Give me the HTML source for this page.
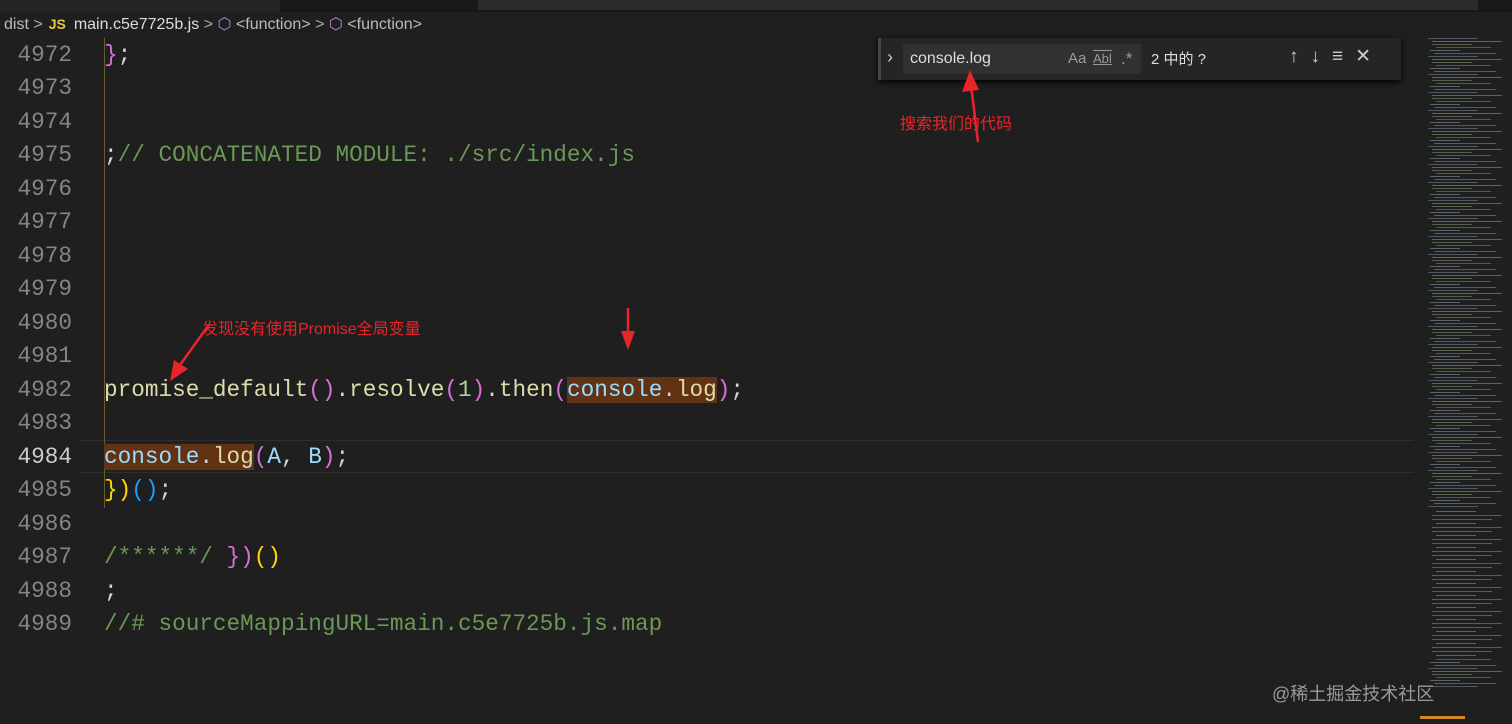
<!DOCTYPE html>
<html><head><meta charset="utf-8"><style>
body{margin:0;width:1512px;height:724px;background:#1f1f1f;overflow:hidden;position:relative;font-family:"Liberation Sans","Noto Sans CJK SC",sans-serif}
.top{position:absolute;left:0;top:0;width:1512px;height:12px;background:#181818}
.top .t{position:absolute;left:0;top:0;width:280px;height:12px;background:#252526}
.top .t2{position:absolute;left:478px;top:0;width:1000px;height:10px;background:#2a2a2a}
.bc{position:absolute;left:4px;top:12px;font-size:16px;color:#bbb;white-space:nowrap;height:24px;line-height:24px}
.bc .js{color:#e5c84a;font-weight:bold;font-size:14px;margin:0 8px 0 6px}
.bc .w{color:#ddd}
.bc .g{color:#aaa}
.code{position:absolute;left:0;top:39px;font-family:"Liberation Mono",monospace;font-size:22.7px}
.ln{position:absolute;left:0;width:72px;text-align:right;color:#858585;height:33.47px;line-height:33.47px}
.tx{position:absolute;left:104px;white-space:pre;color:#d4d4d4;height:33.47px;line-height:33.47px}
.c{color:#6a9955}.f{color:#dcdcaa}.v{color:#9cdcfe}.n{color:#b5cea8}.p{color:#da70d6}.y{color:#ffd700}.b{color:#179fff}
.hl{background:#613214}
.guide{position:absolute;left:104px;top:38px;width:1px;height:470px;background:#6b5b2a}
.cur{position:absolute;left:80px;top:440px;width:1334px;height:31px;border-top:1px solid #2e2e2e;border-bottom:1px solid #2e2e2e}
.find{position:absolute;left:878px;top:38px;width:520px;height:42px;background:#252526;box-shadow:0 2px 6px #000;border-left:3px solid #454545}
.inp{position:absolute;left:22px;top:6px;width:238px;height:30px;background:#313131;color:#ddd;font-size:16px;line-height:30px;padding-left:7px;box-sizing:border-box}
.mm{position:absolute;left:1418px;top:38px;width:94px;height:686px}
.red{position:absolute;color:#e8252a;font-size:16px;white-space:nowrap}
.wm{position:absolute;left:1272px;top:680px;color:#9a9a9a;font-size:18px}
</style></head><body>
<div class="top"><div class="t"></div><div class="t2"></div></div>
<div class="bc">dist <span class="g">&gt;</span><span class="js">JS</span><span class="w">main.c5e7725b.js</span> <span class="g">&gt;</span> <span style="color:#b180d7">⬡</span> &lt;function&gt; <span class="g">&gt;</span> <span style="color:#b180d7">⬡</span> &lt;function&gt;</div>
<div class="cur"></div>
<div class="guide"></div>
<div class="code">
<div class="ln" style="top:0">4972</div><div class="tx" style="top:0"><span class="p">}</span>;</div>
<div class="ln" style="top:33.47px">4973</div>
<div class="ln" style="top:66.94px">4974</div>
<div class="ln" style="top:100.41px">4975</div><div class="tx" style="top:100.41px">;<span class="c">// CONCATENATED MODULE: ./src/index.js</span></div>
<div class="ln" style="top:133.88px">4976</div>
<div class="ln" style="top:167.35px">4977</div>
<div class="ln" style="top:200.82px">4978</div>
<div class="ln" style="top:234.29px">4979</div>
<div class="ln" style="top:267.76px">4980</div>
<div class="ln" style="top:301.23px">4981</div>
<div class="ln" style="top:334.7px">4982</div><div class="tx" style="top:334.7px"><span class="f">promise_default</span><span class="p">()</span>.<span class="f">resolve</span><span class="p">(</span><span class="n">1</span><span class="p">)</span>.<span class="f">then</span><span class="p">(</span><span class="hl"><span class="v">console</span>.<span class="f">log</span></span><span class="p">)</span>;</div>
<div class="ln" style="top:368.17px">4983</div>
<div class="ln" style="top:401.64px;color:#ccc">4984</div><div class="tx" style="top:401.64px"><span class="hl"><span class="v">console</span>.<span class="f">log</span></span><span class="p">(</span><span class="v">A</span>, <span class="v">B</span><span class="p">)</span>;</div>
<div class="ln" style="top:435.11px">4985</div><div class="tx" style="top:435.11px"><span class="y">}</span><span class="y">)</span><span class="b">()</span>;</div>
<div class="ln" style="top:468.58px">4986</div>
<div class="ln" style="top:502.05px">4987</div><div class="tx" style="top:502.05px"><span class="c">/******/</span> <span class="p">})</span><span class="y">()</span></div>
<div class="ln" style="top:535.52px">4988</div><div class="tx" style="top:535.52px">;</div>
<div class="ln" style="top:568.99px">4989</div><div class="tx" style="top:568.99px"><span class="c">//# sourceMappingURL=main.c5e7725b.js.map</span></div>
</div>
<div class="find">
<div style="position:absolute;left:6px;top:9px;color:#ccc;font-size:18px">›</div>
<div class="inp">console.log<span style="position:absolute;left:165px;color:#999;font-size:15px">Aa</span><span style="position:absolute;left:190px;color:#999;font-size:13px;text-decoration:underline overline">Abl</span><span style="position:absolute;left:218px;color:#999;font-size:17px">.*</span></div>
<div style="position:absolute;left:270px;top:10px;color:#ddd;font-size:15px">2 中的 ?</div>
<div style="position:absolute;left:408px;top:7px;color:#ccc;font-size:19px;letter-spacing:12px">↑↓≡✕</div>
</div>
<svg class="mm" viewBox="0 0 94 686">
<defs>
<pattern id="a" width="94" height="18" patternUnits="userSpaceOnUse">
<rect x="10" y="0" width="50" height="1" fill="#6f7f90"/><rect x="14" y="3" width="70" height="1" fill="#8090a0"/><rect x="14" y="6" width="40" height="1" fill="#7a8a6a"/><rect x="18" y="9" width="55" height="1" fill="#6f7f90"/><rect x="12" y="12" width="30" height="1" fill="#8090a0"/><rect x="16" y="15" width="62" height="1" fill="#6a8aaa"/>
</pattern>
<pattern id="b" width="94" height="12" patternUnits="userSpaceOnUse">
<rect x="14" y="1" width="60" height="1" fill="#6a9955"/><rect x="18" y="5" width="40" height="1" fill="#8090a0"/><rect x="14" y="9" width="70" height="1" fill="#6a9955"/>
</pattern>
</defs>
<rect x="0" y="0" width="94" height="470" fill="url(#a)" opacity=".6"/>
<rect x="0" y="470" width="94" height="150" fill="url(#b)" opacity=".6"/>
<rect x="0" y="620" width="94" height="30" fill="url(#a)" opacity=".6"/>
<rect x="2" y="678" width="45" height="3" fill="#d08a20"/>
</svg>
<svg style="position:absolute;left:0;top:0" width="1512" height="724">
<g fill="#e8252a" stroke="#e8252a">
<line x1="978" y1="142" x2="971" y2="85" stroke-width="2.5"/><polygon points="970,70 962,92 979,90" stroke="none"/>
<line x1="208" y1="326" x2="180" y2="365" stroke-width="2.5"/><polygon points="170,381 174,360 188,369" stroke="none"/>
<line x1="628" y1="308" x2="628" y2="335" stroke-width="2.5"/><polygon points="628,350 621,331 635,331" stroke="none"/>
</g></svg>
<div class="red" style="left:900px;top:110px">搜索我们的代码</div>
<div class="red" style="left:202px;top:315px">发现没有使用Promise全局变量</div>
<div class="wm">@稀土掘金技术社区</div>
</body></html>
